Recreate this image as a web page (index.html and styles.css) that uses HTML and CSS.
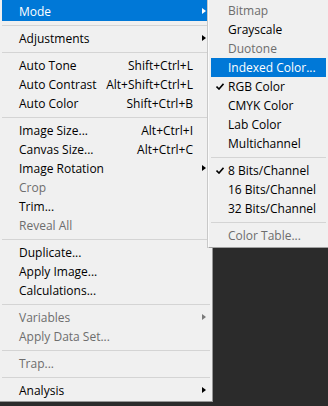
FILE: index.html
```html
<!DOCTYPE html>
<html lang="en">
<head>
<meta charset="UTF-8">
<title>Image menu</title>
<link rel="stylesheet" href="styles.css">
</head>
<body>
<div class="menu">
  <div class="item active"><span class="label">Mode</span><span class="key"></span><span class="arrow"></span></div>
  <div class="sep"></div>
  <div class="item"><span class="label">Adjustments</span><span class="key"></span><span class="arrow"></span></div>
  <div class="sep"></div>
  <div class="item"><span class="label">Auto Tone</span><span class="key">Shift+Ctrl+L</span></div>
  <div class="item"><span class="label">Auto Contrast</span><span class="key">Alt+Shift+Ctrl+L</span></div>
  <div class="item"><span class="label">Auto Color</span><span class="key">Shift+Ctrl+B</span></div>
  <div class="sep"></div>
  <div class="item"><span class="label">Image Size...</span><span class="key">Alt+Ctrl+I</span></div>
  <div class="item"><span class="label">Canvas Size...</span><span class="key">Alt+Ctrl+C</span></div>
  <div class="item"><span class="label">Image Rotation</span><span class="key"></span><span class="arrow"></span></div>
  <div class="item off"><span class="label">Crop</span></div>
  <div class="item"><span class="label">Trim...</span></div>
  <div class="item off"><span class="label">Reveal All</span></div>
  <div class="sep"></div>
  <div class="item"><span class="label">Duplicate...</span></div>
  <div class="item"><span class="label">Apply Image...</span></div>
  <div class="item"><span class="label">Calculations...</span></div>
  <div class="sep"></div>
  <div class="item off"><span class="label">Variables</span><span class="key"></span><span class="arrow"></span></div>
  <div class="item off"><span class="label">Apply Data Set...</span></div>
  <div class="sep"></div>
  <div class="item off"><span class="label">Trap...</span></div>
  <div class="sep"></div>
  <div class="item"><span class="label">Analysis</span><span class="key"></span><span class="arrow"></span></div>
</div>

<div class="submenu">
  <div class="item off"><span class="check"></span><span class="label">Bitmap</span></div>
  <div class="item"><span class="check"></span><span class="label">Grayscale</span></div>
  <div class="item off"><span class="check"></span><span class="label">Duotone</span></div>
  <div class="item active"><span class="check"></span><span class="label">Indexed Color...</span></div>
  <div class="item"><span class="check"><svg width="8" height="7" viewBox="0 0 8 7"><path d="M0.5 3.5 L3 6 L7.5 0.8" fill="none" stroke="#000" stroke-width="1.6"/></svg></span><span class="label">RGB Color</span></div>
  <div class="item"><span class="check"></span><span class="label">CMYK Color</span></div>
  <div class="item"><span class="check"></span><span class="label">Lab Color</span></div>
  <div class="item"><span class="check"></span><span class="label">Multichannel</span></div>
  <div class="sep"></div>
  <div class="item"><span class="check"><svg width="8" height="7" viewBox="0 0 8 7"><path d="M0.5 3.5 L3 6 L7.5 0.8" fill="none" stroke="#000" stroke-width="1.6"/></svg></span><span class="label">8 Bits/Channel</span></div>
  <div class="item"><span class="check"></span><span class="label">16 Bits/Channel</span></div>
  <div class="item"><span class="check"></span><span class="label">32 Bits/Channel</span></div>
  <div class="sep"></div>
  <div class="item off"><span class="check"></span><span class="label">Color Table...</span></div>
</div>
</body>
</html>
```

FILE: styles.css
```css
body {
  margin: 0;
  background: #2b2b2b;
  font-family: "Open Sans", "Noto Sans", sans-serif;
  font-size: 12px;
  color: #000;
  position: relative;
  height: 406px;
  overflow: hidden;
}

/* main menu */
.menu {
  width: 210px;
  padding: 2px 2px 1px 0;
  background: #f0f0f0;
  border-right: 1px solid #979797;
  border-bottom: 1px solid #979797;
}
.menu .item {
  display: grid;
  grid-template-columns: 1fr auto 16px;
  height: 19px;
  line-height: 19px;
  margin-left: 2px;
  padding-left: 17px;
  white-space: nowrap;
}
.menu .item.active { box-shadow: 0 -2px 0 #0078d7; }
.menu .key { padding-right: 1px; }
.menu .sep {
  height: 1px;
  background: #d4d4d4;
  margin: 4px 0 3px 2px;
}
.item.off { color: #6d6d6d; }
.item.active {
  background: #0078d7;
  color: #fff;
}
.arrow {
  width: 0;
  height: 0;
  margin: 6px 0 0 8px;
  border-top: 3.5px solid transparent;
  border-bottom: 3.5px solid transparent;
  border-left: 4px solid #000;
}
.item.off .arrow { border-left-color: #7a7a7a; }
.item.active .arrow { border-left-color: #fff; }

/* submenu overlay */
.submenu {
  position: absolute;
  left: 208px;
  top: 0;
  width: 115px;
  padding: 1px 2px 2px 2px;
  background: #f0f0f0;
  border-left: 1px solid #fafafa;
  border-right: 1px solid #a0a0a0;
  border-bottom: 1px solid #a0a0a0;
  box-shadow: -1px 0 0 #c8c8c8;
}
.submenu .item {
  display: flex;
  height: 19px;
  line-height: 19px;
  white-space: nowrap;
}
.check {
  width: 17px;
  display: flex;
  align-items: center;
  padding-left: 5px;
  box-sizing: border-box;
}
.submenu .sep {
  height: 1px;
  background: #d4d4d4;
  margin: 4px 0 3px 0;
}
```
